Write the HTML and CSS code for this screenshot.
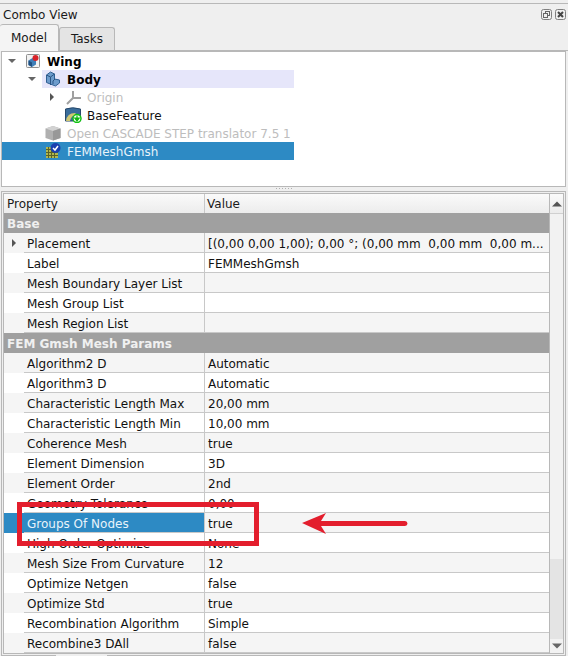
FILE: index.html
```html
<!DOCTYPE html>
<html lang="en">
<head>
  <meta charset="UTF-8">
  <title>Combo View</title>
  <link rel="stylesheet" href="styles.css">
</head>
<body>
  <div class="dock">
    <!-- Dock title -->
    <div class="dock-title">
      <span>Combo View</span>
      <div class="dock-buttons">
        <svg width="11" height="11" viewBox="0 0 11 11"><rect x="0.5" y="0.5" width="10" height="10" rx="2" fill="none" stroke="#808080"/><rect x="4.5" y="2.5" width="4" height="4" fill="none" stroke="#666"/><rect x="2.5" y="4.5" width="4" height="4" fill="#efefef" stroke="#666"/></svg>
        <svg width="11" height="11" viewBox="0 0 11 11"><rect x="0.5" y="0.5" width="10" height="10" rx="2" fill="none" stroke="#808080"/><path d="M3 3l5 5M8 3l-5 5" stroke="#444" stroke-width="2"/></svg>
      </div>
    </div>

    <!-- Tabs -->
    <div class="tabs">
      <div class="tab tab-active">Model</div>
      <div class="tab">Tasks</div>
    </div>

    <div class="tab-pane">
      <!-- Model tree -->
      <div class="tree">
        <div class="tree-row indent-0">
          <svg class="twist" width="10" height="18" viewBox="0 0 10 18"><path d="M1 7h8l-4 4z" fill="#666"/></svg>
          <div class="tree-item bold">
            <svg class="tree-icon" width="16" height="16" viewBox="0 0 16 16"><rect x="1.5" y="1.5" width="13" height="13" rx="1" fill="#f2f2f2" stroke="#8f8f8f"/><path d="M3.500 7.500l4-2.500 3.500 2v4.500l-4 2.500-3.500-2z" fill="#3f7fb8"/><path d="M3.500 7.500l3.500 2v4.500l-3.500-2z" fill="#1f4f80"/><circle cx="10.500" cy="5" r="3" fill="#d8232a"/></svg>
            <span>Wing</span>
          </div>
        </div>
        <div class="tree-row indent-1">
          <svg class="twist" width="10" height="18" viewBox="0 0 10 18"><path d="M1 7h8l-4 4z" fill="#666"/></svg>
          <div class="tree-item bold item-body">
            <svg class="tree-icon" width="16" height="16" viewBox="0 0 16 16"><path d="M1.500 4l4-3 4 2v5l5 1v3l-4 3-9-3.500z" fill="#6d9ccc" stroke="#2f5f92"/><path d="M5.500 6v8M5.500 6l4-3M5.500 6l-4-2M10 8l-2 2v3" stroke="#2a5584" fill="none"/></svg>
            <span>Body</span>
          </div>
        </div>
        <div class="tree-row indent-2">
          <svg class="twist" width="10" height="18" viewBox="0 0 10 18"><path d="M3 5v8l4-4z" fill="#555"/></svg>
          <div class="tree-item muted">
            <svg class="tree-icon" width="16" height="16" viewBox="0 0 16 16"><path d="M8 9V2M8 9h8M8 9l-6 6" stroke="#a0a0a0" stroke-width="2" fill="none"/></svg>
            <span>Origin</span>
          </div>
        </div>
        <div class="tree-row indent-2">
          <span class="twist-blank"></span>
          <div class="tree-item item-feature">
            <svg class="tree-icon" width="17" height="16" viewBox="0 0 17 16"><path d="M0.500 2q7-2.500 15 0v12h-15z" fill="#3a6c9a" stroke="#27496c"/><path d="M1 14q1-8 9-8l2 2q-6 0-7 6z" fill="#cfc873"/><circle cx="12" cy="11.500" r="4" fill="#fff" stroke="#12c412" stroke-width="1.500"/><path d="M12 8.500v3M9.800 11h4.400L12 14z" stroke="#10b810" stroke-width="1.200" fill="#10b810"/></svg>
            <span>BaseFeature</span>
          </div>
        </div>
        <div class="tree-row indent-1">
          <span class="twist-blank"></span>
          <div class="tree-item muted">
            <svg class="tree-icon" width="16" height="16" viewBox="0 0 16 16"><path d="M0.500 3.500l7.500-2.500 7.500 2.500v9.500l-7.500 2.500-7.500-2.500z" fill="#b0b0b0"/><path d="M0.500 3.500l7.500 2.500 7.500-2.500-7.500-2.500z" fill="#d2d2d2"/><path d="M8 6v9.500l7.500-2.500V3.500z" fill="#989898"/></svg>
            <span>Open CASCADE STEP translator 7.5 1</span>
          </div>
        </div>
        <div class="tree-row tree-row-selected">
          <span class="twist-blank select-lead"></span>
          <div class="tree-item">
            <svg class="tree-icon" width="16" height="16" viewBox="0 0 16 16"><path d="M1 4h12v11H1z" fill="#b2b84e"/><path d="M1 6.500h12M1 9.500h12M1 12.500h12M3.500 4v11M6.500 4v11M9.500 4v11" stroke="#5b6226" fill="none"/><circle cx="10.500" cy="5" r="5" fill="#1a3fb0"/><path d="M8 5l2 2 3-4" stroke="#fff" stroke-width="1.500" fill="none"/></svg>
            <span>FEMMeshGmsh</span>
          </div>
        </div>
      </div>

      <div class="splitter"></div>

      <!-- Property editor -->
      <div class="props-frame">
        <div class="props">
          <div class="table">
            <div class="table-head">
              <div class="head-name">Property</div>
              <div class="head-value">Value</div>
            </div>
            <div class="table-body">
              <div class="group">Base</div>
              <div class="prop"><div class="branch"><svg width="6" height="10" viewBox="0 0 6 10"><path d="M1 1v8l4-4z" fill="#555"/></svg></div><div class="name">Placement</div><div class="value">[(0,00 0,00 1,00); 0,00 °; (0,00 mm  0,00 mm  0,00 m...</div></div>
              <div class="prop"><div class="branch"></div><div class="name">Label</div><div class="value">FEMMeshGmsh</div></div>
              <div class="prop"><div class="branch"></div><div class="name">Mesh Boundary Layer List</div><div class="value"></div></div>
              <div class="prop"><div class="branch"></div><div class="name">Mesh Group List</div><div class="value"></div></div>
              <div class="prop"><div class="branch"></div><div class="name">Mesh Region List</div><div class="value"></div></div>
              <div class="group">FEM Gmsh Mesh Params</div>
              <div class="prop"><div class="branch"></div><div class="name">Algorithm2 D</div><div class="value">Automatic</div></div>
              <div class="prop"><div class="branch"></div><div class="name">Algorithm3 D</div><div class="value">Automatic</div></div>
              <div class="prop"><div class="branch"></div><div class="name">Characteristic Length Max</div><div class="value">20,00 mm</div></div>
              <div class="prop"><div class="branch"></div><div class="name">Characteristic Length Min</div><div class="value">10,00 mm</div></div>
              <div class="prop"><div class="branch"></div><div class="name">Coherence Mesh</div><div class="value">true</div></div>
              <div class="prop"><div class="branch"></div><div class="name">Element Dimension</div><div class="value">3D</div></div>
              <div class="prop"><div class="branch"></div><div class="name">Element Order</div><div class="value">2nd</div></div>
              <div class="prop"><div class="branch"></div><div class="name">Geometry Tolerance</div><div class="value">0,00</div></div>
              <div class="prop prop-selected"><div class="branch"></div><div class="name">Groups Of Nodes</div><div class="value">true</div></div>
              <div class="prop"><div class="branch"></div><div class="name">High Order Optimize</div><div class="value">None</div></div>
              <div class="prop"><div class="branch"></div><div class="name">Mesh Size From Curvature</div><div class="value">12</div></div>
              <div class="prop"><div class="branch"></div><div class="name">Optimize Netgen</div><div class="value">false</div></div>
              <div class="prop"><div class="branch"></div><div class="name">Optimize Std</div><div class="value">true</div></div>
              <div class="prop"><div class="branch"></div><div class="name">Recombination Algorithm</div><div class="value">Simple</div></div>
              <div class="prop"><div class="branch"></div><div class="name">Recombine3 DAll</div><div class="value">false</div></div>
            </div>
          </div>

          <!-- Scrollbar -->
          <div class="scrollbar">
            <div class="scroll-btn"><svg width="10" height="6" viewBox="0 0 10 6"><path d="M0 5.500h10l-5-5z" fill="#555"/></svg></div>
            <div class="scroll-groove"></div>
            <div class="scroll-handle"></div>
            <div class="scroll-end"><svg width="10" height="6" viewBox="0 0 10 6"><path d="M0 0.500h10l-5 5z" fill="#666"/></svg></div>
          </div>
        </div>
      </div>
    </div>
  </div>

  <!-- Red annotation drawn over the screenshot -->
  <div class="mark-box"></div>
  <svg class="mark-arrow" width="108" height="22" viewBox="0 0 108 22"><path d="M1 11L25 1l-5 8h84a2.300 2.300 0 0 1 0 5H20l5 8z" fill="#e31e2d"/></svg>
</body>
</html>
```

FILE: styles.css
```css
html, body {
  margin: 0;
  height: 656px;
  overflow: hidden;
}

body {
  position: relative;
  background-color: #efefef;
  font-family: "DejaVu Sans", sans-serif;
  font-size: 12px;
  color: #1a1a1a;
}

.dock {
  padding-top: 3px;
}

.dock-title {
  display: flex;
  justify-content: space-between;
  align-items: center;
  height: 21px;
  padding: 0 2px 0 3px;
  border-top: 1px solid #b8b8b8;
}

.dock-buttons {
  display: flex;
  gap: 3px;
}

/* Tabs */
.tabs {
  display: flex;
  align-items: flex-end;
  height: 25px;
}

.tab {
  width: 54px;
  height: 22px;
  line-height: 22px;
  text-align: center;
  background-color: #e4e4e4;
  border: 1px solid #b8b8b8;
  border-bottom: none;
  border-radius: 3px 3px 0 0;
}

.tab-active {
  width: 58px;
  height: 26px;
  line-height: 27px;
  background-color: #f4f4f4;
  border-left: none;
  margin-bottom: -1px;
  position: relative;
  z-index: 1;
}

.tab-pane {
  border-top: 1px solid #b8b8b8;
}

/* Model tree */
.tree {
  box-sizing: border-box;
  height: 136px;
  margin: 0 2px 0 1px;
  background-color: white;
  border: 1px solid #b8b8b8;
}

.tree-row {
  display: flex;
  box-sizing: border-box;
  width: 292px;
  height: 18px;
  line-height: 18px;
  color: #111;
}

.indent-0 { padding-left: 5px; }
.indent-1 { padding-left: 25px; }
.indent-2 { padding-left: 45px; }

.twist {
  flex: none;
  margin-right: 5px;
}

.twist-blank {
  flex: none;
  width: 15px;
}

.select-lead {
  width: 40px;
}

.tree-item {
  flex: 1;
  display: flex;
  align-items: center;
  white-space: nowrap;
  overflow: hidden;
}

.tree-item span {
  padding-top: 2px;
}

.tree-icon {
  flex: none;
  margin-left: 3px;
  margin-right: 6px;
}

.item-feature .tree-icon {
  margin-right: 5px;
}

.item-body {
  background-color: #e6e6fa;
}

.bold {
  font-weight: bold;
  color: black;
}

.muted {
  color: #bdbdbd;
}

.tree-row-selected {
  background-color: #2d8ac4;
  color: #e8f3fa;
}

.splitter {
  height: 4px;
  position: relative;
}

.splitter::after {
  content: "";
  position: absolute;
  left: 276px;
  top: 1px;
  width: 17px;
  height: 1px;
  background-image: linear-gradient(to right, #b0b0b0 1px, transparent 1px);
  background-size: 3px 1px;
}

/* Property editor */
.props-frame {
  position: relative;
  box-sizing: border-box;
  height: 465px;
  margin: 0 2px 0 1px;
  padding: 1px;
  border: 1px solid #b8b8b8;
}

/* gap of the tab below the frame */
.props-frame::after {
  content: "";
  position: absolute;
  left: 54px;
  bottom: -1px;
  width: 51px;
  height: 1px;
  background-color: #efefef;
}

.props {
  display: flex;
  box-sizing: border-box;
  height: 461px;
  background-color: white;
  border: 1px solid #b8b8b8;
}

.table {
  box-sizing: border-box;
  width: 546px;
  border-right: 1px solid #b8b8b8;
  overflow: hidden;
}

.table-head {
  display: flex;
  height: 19px;
  line-height: 21px;
  background: linear-gradient(#fafafa, #ececec);
}

.head-name {
  box-sizing: border-box;
  width: 201px;
  padding-left: 3px;
  border-right: 1px solid #c8c8c8;
}

.head-value {
  padding-left: 2px;
}

.group {
  box-sizing: border-box;
  height: 20px;
  line-height: 22px;
  padding-left: 3px;
  background-color: #a0a0a0;
  color: #f0f0f0;
  font-weight: bold;
}

.prop {
  display: flex;
  height: 20px;
  line-height: 22px;
  color: #111;
}

.table-body > :nth-child(even) {
  background-color: #f5f5f5;
}

.branch {
  flex: none;
  display: flex;
  align-items: center;
  box-sizing: border-box;
  width: 20px;
  padding-left: 7px;
}

.name {
  flex: none;
  box-sizing: border-box;
  width: 181px;
  padding-left: 3px;
  border-bottom: 1px solid #c8c8c8;
  border-right: 1px solid #c8c8c8;
}

.value {
  flex: 1;
  padding-left: 3px;
  border-bottom: 1px solid #c8c8c8;
  white-space: pre;
  overflow: hidden;
}

.prop-selected .branch,
.prop-selected .name {
  background-color: #2d8ac4;
  color: #e8f3fa;
}

/* Scrollbar */
.scrollbar {
  flex: 1;
  display: flex;
  flex-direction: column;
  background-color: #f2f2f2;
}

.scroll-btn {
  height: 19px;
  display: flex;
  justify-content: center;
  align-items: center;
  background: linear-gradient(#fafafa, #ececec);
  border-bottom: 1px solid #d0d0d0;
}

.scroll-groove {
  flex: 1;
}

.scroll-handle {
  height: 80px;
  background-color: #e4e4e4;
}

.scroll-end {
  height: 14px;
  display: flex;
  justify-content: center;
  align-items: center;
}

/* Annotation */
.mark-box {
  position: absolute;
  left: 17px;
  top: 502px;
  width: 232px;
  height: 34px;
  border: 5px solid #e31e2d;
}

.mark-arrow {
  position: absolute;
  left: 301px;
  top: 512px;
}
```
